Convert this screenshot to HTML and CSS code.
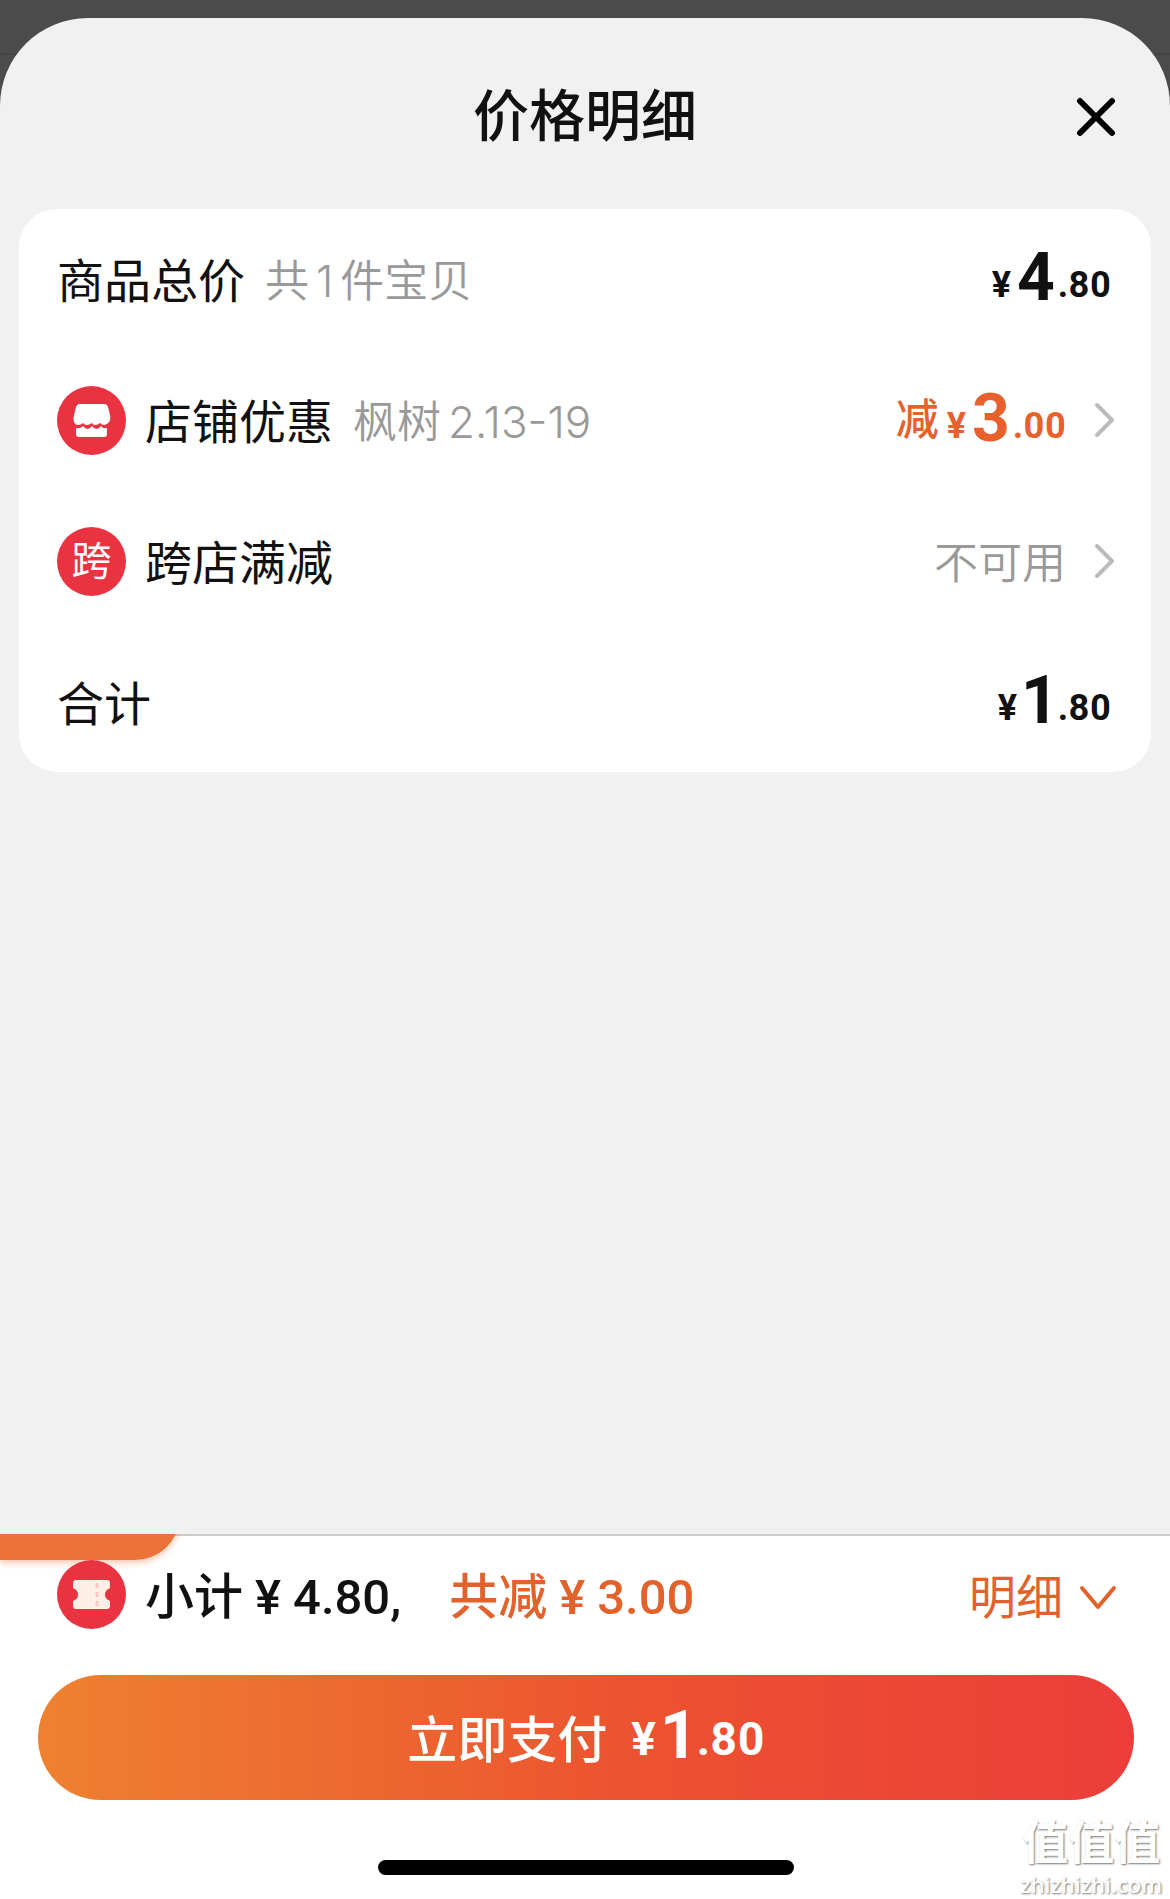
FILE: index.html
```
<!DOCTYPE html>
<html lang="zh-CN">
<head>
  <meta charset="UTF-8">
  <meta name="viewport" content="width=device-width, initial-scale=1.0">
  <title>价格明细</title>
  <link rel="stylesheet" href="styles.css">
</head>
<body>
  <div class="sheet">
    <header class="sheet-header">
      <h1>价格明细</h1>
      <button class="close-btn" type="button" aria-label="关闭">
        <svg width="40" height="40" viewBox="0 0 40 40" fill="none" stroke="#000" stroke-width="6" stroke-linecap="round">
          <path d="M4 4L36 36M36 4L4 36"/>
        </svg>
      </button>
    </header>

    <main class="card">
      <div class="row">
        <span class="label">商品总价</span>
        <span class="note"><span>共</span><span>1</span><span>件宝贝</span></span>
        <span class="price"><span class="yen">¥</span><span class="int">4</span><span class="dec">.80</span></span>
      </div>
      <div class="row">
        <svg class="badge" viewBox="0 0 69 69">
          <circle cx="34.500" cy="34.500" r="34.500" fill="#e93340"/>
          <path d="M22 18h25q3 0 4 3l2 8q1 5-1 7-2 3-5 3-2 0-4-2-2 2-4.500 2t-4-2q-2 2-4.500 2t-4-2q-2 2-5 2-3 0-4-3-1-3 0-7l2-8q1-3 3-3z" fill="#fff"/>
          <path d="M19 42q4 1 7-2 2 3 4.500 3t4.500-3q2 3 4.500 3t4.500-3q2 3 6 2v6q0 3-3 3H22q-3 0-3-3z" fill="#fff"/>
        </svg>
        <span class="label">店铺优惠</span>
        <span class="note"><span>枫树</span><span>2.13-19</span></span>
        <a class="row-link" href="#">
          <span class="price minus"><span class="minus-text">减</span><span class="yen">¥</span><span class="int">3</span><span class="dec">.00</span></span>
          <svg class="arrow" width="22" height="36" viewBox="0 0 22 36"><path d="M3 3l15 15L3 33"/></svg>
        </a>
      </div>
      <div class="row">
        <span class="badge badge-text">跨</span>
        <span class="label">跨店满减</span>
        <a class="row-link" href="#">
          <span class="note">不可用</span>
          <svg class="arrow" width="22" height="36" viewBox="0 0 22 36"><path d="M3 3l15 15L3 33"/></svg>
        </a>
      </div>
      <div class="row">
        <span class="label">合计</span>
        <span class="price"><span class="yen">¥</span><span class="int">1</span><span class="dec">.80</span></span>
      </div>
    </main>
  </div>

  <footer class="pay-bar">
    <div class="tab"></div>
    <div class="summary">
      <svg class="badge" viewBox="0 0 69 69">
        <circle cx="34.500" cy="34.500" r="34.500" fill="#e93340"/>
        <path d="M19 20h31q3 0 3 3v5q-5 2-5 6.500t5 6.500v5q0 3-3 3H19q-3 0-3-3v-5q5-2 5-6.500T16 28v-5q0-3 3-3z" fill="#fdeee6"/>
        <path d="M40 23v24" stroke="#f8c9c0" stroke-width="3" stroke-dasharray="5 4"/>
      </svg>
      <span class="subtotal"><span>小计</span><span>¥</span><span>4.80,</span></span>
      <span class="subtotal saved"><span>共减</span><span>¥</span><span>3.00</span></span>
      <button class="detail-btn" type="button">
        <span>明细</span>
        <svg width="38" height="28" viewBox="0 0 38 28" fill="none" stroke="#e2622b" stroke-width="4" stroke-linecap="round" stroke-linejoin="round">
          <path d="M3 4l16 19L35 4"/>
        </svg>
      </button>
    </div>
    <button class="pay-btn" type="button">
      <span class="pay-text">立即支付</span>
      <span class="price"><span class="yen">¥</span><span class="int">1</span><span class="dec">.80</span></span>
    </button>
    <div class="home-bar"></div>
    <div class="watermark">
      <span class="mark-logo">值值值</span>
      <span class="mark-url">zhizhizhi.com</span>
    </div>
  </footer>
</body>
</html>
```
FILE: styles.css
```
* {
  box-sizing: border-box;
}
body {
  margin: 0;
  min-height: 100vh;
  padding-top: 18px;
  display: flex;
  flex-direction: column;
  background: linear-gradient(#4b4b4b 53px, #434343 53px, #434343 55px, #4b4b4b 55px);
  font-family: Roboto, "Noto Sans CJK SC", sans-serif;
  color: #111;
}
button {
  border: none;
  background: none;
  padding: 0;
  font-family: inherit;
  cursor: pointer;
}
a {
  color: inherit;
  text-decoration: none;
}
.sheet {
  flex: 1;
  background: #f1f1f1;
  border-radius: 88px 88px 0 0;
  padding: 0 19px;
}
.sheet-header {
  position: relative;
  height: 191px;
  padding-top: 6px;
  display: flex;
  align-items: center;
  justify-content: center;
}
h1 {
  margin: 0;
  font-size: 56px;
  line-height: 80px;
  font-weight: 500;
}
.close-btn {
  position: absolute;
  right: 35px;
  top: 79px;
  height: 40px;
}
.close-btn svg {
  display: block;
}

/* price card */
.card {
  background: #fff;
  border-radius: 38px;
  padding: 0 35px 0 38px;
}
.row {
  height: 140px;
  display: flex;
  align-items: center;
}
.row + .row {
  margin-top: 1px;
}
.badge {
  width: 69px;
  height: 69px;
  margin-right: 19px;
  flex: none;
}
.badge-text {
  border-radius: 50%;
  background: #e93340;
  color: #fff;
  font-size: 40px;
  line-height: 69px;
  text-align: center;
}
.label {
  font-size: 47px;
  padding-bottom: 3px;
}
.note {
  display: flex;
  align-items: baseline;
  gap: 7px;
  font-family: Inter, "Noto Sans CJK SC", sans-serif;
  font-size: 44px;
  font-weight: 350;
  color: #999;
  padding-bottom: 3px;
}
.label + .note {
  margin-left: 20px;
}
.price {
  margin-left: auto;
  margin-right: 5px;
  padding-bottom: 3px;
  display: flex;
  align-items: flex-end;
  font-weight: 700;
  font-variant-numeric: proportional-nums;
}
.yen,
.dec {
  font-size: 36px;
  line-height: 64px;
}
.int {
  font-size: 66px;
  line-height: 78px;
  margin-left: 6px;
  margin-right: 3px;
}
.row-link {
  margin-left: auto;
  display: flex;
  align-items: center;
  gap: 28px;
}
.minus {
  margin: 0;
  color: #e8602c;
}
.minus-text {
  font-size: 43px;
  line-height: 75px;
  font-weight: 500;
  margin-right: 8px;
}
.arrow {
  fill: none;
  stroke: #bbb;
  stroke-width: 4;
  stroke-linecap: round;
  stroke-linejoin: round;
}

/* bottom bar */
.pay-bar {
  position: relative;
  background: #fff;
  border-top: 2px solid #ccc;
  padding: 24px 36px 24px 38px;
}
.tab {
  position: absolute;
  left: 0;
  top: -38px;
  width: 180px;
  height: 62px;
  background: #eb7238;
  border-radius: 0 0 45px 0;
  box-shadow: 0 3px 6px rgba(235, 114, 56, 0.4);
  clip-path: inset(36px -10px -10px 0);
}
.summary {
  position: relative;
  height: 69px;
  padding: 0 17px 0 19px;
  display: flex;
  align-items: center;
}
.subtotal {
  display: flex;
  align-items: baseline;
  gap: 12px;
  font-size: 49px;
  line-height: 66px;
  font-weight: 500;
  padding-top: 6px;
}
.subtotal + .subtotal {
  margin-left: 48px;
}
.saved {
  color: #e2622b;
}
.detail-btn {
  margin-left: auto;
  display: flex;
  align-items: center;
  gap: 16px;
  font-size: 47px;
  line-height: 66px;
  color: #e2622b;
  padding-top: 6px;
}
.pay-btn {
  width: 100%;
  height: 125px;
  margin-top: 46px;
  display: flex;
  align-items: center;
  justify-content: center;
  border-radius: 63px;
  background: linear-gradient(90deg, #ee8130, #ec5230 55%, #ec3d3a);
  color: #fff;
  font-size: 50px;
  font-weight: 500;
}
.pay-text {
  padding-bottom: 3px;
}
.pay-btn .price {
  margin: 0 0 0 24px;
}
.pay-btn .yen,
.pay-btn .dec {
  font-size: 46px;
  line-height: 72px;
}
.home-bar {
  width: 38%;
  height: 15px;
  margin: 60px auto 0;
  border-radius: 8px;
  background: #000;
}
.watermark {
  position: absolute;
  right: 8px;
  bottom: 2px;
  display: flex;
  flex-direction: column;
  align-items: center;
  color: #fff;
  text-shadow: 1px 1px 2px #777;
}
.mark-logo {
  font-size: 46px;
  line-height: 56px;
  font-weight: 700;
}
.mark-url {
  font-family: "Noto Sans", sans-serif;
  font-size: 22px;
  line-height: 26px;
  font-weight: 500;
}
```
